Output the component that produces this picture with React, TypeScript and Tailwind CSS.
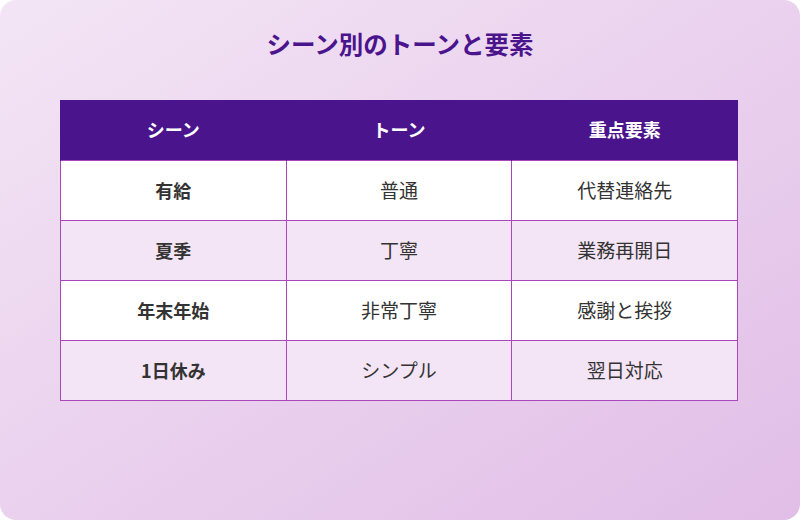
const rows = [
  { scene: "有給", tone: "普通", focus: "代替連絡先" },
  { scene: "夏季", tone: "丁寧", focus: "業務再開日" },
  { scene: "年末年始", tone: "非常丁寧", focus: "感謝と挨拶" },
  { scene: "1日休み", tone: "シンプル", focus: "翌日対応" },
];

export default function App() {
  return (
    <div className="w-[800px] h-[520px] bg-white font-['Noto_Sans_CJK_JP',sans-serif]">
      <div className="w-full h-full rounded-2xl bg-gradient-to-br from-[#f3e5f5] to-[#e1bee7] pt-[26px]">
        <h1 className="text-center text-[24.5px] leading-[36px] font-bold text-[#4a148c]">シーン別のトーンと要素</h1>

        <table className="mt-[38px] ml-[60px] w-[678px] border-collapse text-[18px] table-fixed">
          <thead>
            <tr className="bg-[#4a148c] text-white h-[60px]">
              <th className="font-bold border-x border-[#4a148c]">シーン</th>
              <th className="font-bold">トーン</th>
              <th className="font-bold border-x border-[#4a148c]">重点要素</th>
            </tr>
          </thead>
          <tbody>
            {rows.map((r, i) => (
              <tr key={r.scene} className={i % 2 === 0 ? "bg-white h-[60px]" : "bg-[#f3e5f5] h-[60px]"}>
                <td className="border border-[#ab47bc] text-center font-bold text-[#333333]">{r.scene}</td>
                <td className="border border-[#ab47bc] text-center text-[19px] text-[#333333]">{r.tone}</td>
                <td className="border border-[#ab47bc] text-center text-[19px] text-[#333333]">{r.focus}</td>
              </tr>
            ))}
          </tbody>
        </table>
      </div>
    </div>
  );
}
